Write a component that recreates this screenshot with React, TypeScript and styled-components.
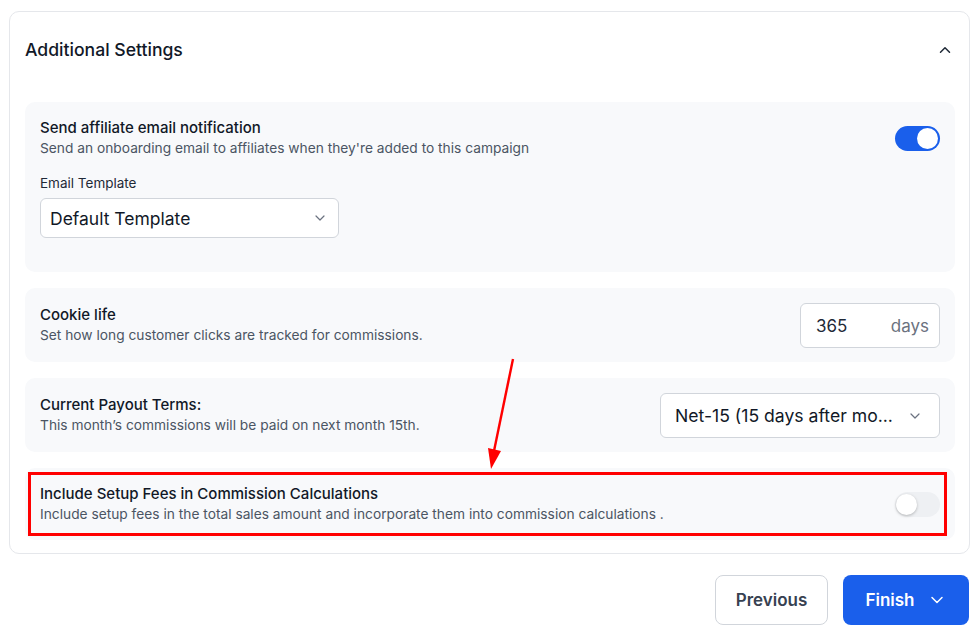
import { useState } from "react";
import styled, { createGlobalStyle } from "styled-components";

const GlobalStyle = createGlobalStyle`
  * { box-sizing: border-box; }
  body {
    margin: 0;
    background: #ffffff;
    font-family: Inter, "Noto Sans", sans-serif;
    color: #111827;
  }
`;

const ChevronDown = ({ color = "#6b7280", size = 16 }: { color?: string; size?: number }) => (
  <svg width={size} height={size} viewBox="0 0 24 24" fill="none" stroke={color} strokeWidth={1.8} strokeLinecap="round" strokeLinejoin="round">
    <path d="M6 9l6 6 6-6" />
  </svg>
);

const ChevronUp = () => (
  <svg width={18} height={18} viewBox="0 0 24 24" fill="none" stroke="#1f2937" strokeWidth={2} strokeLinecap="round" strokeLinejoin="round">
    <path d="M6 15l6-6 6 6" />
  </svg>
);

const App = () => {
  const [notify, setNotify] = useState(true);
  const [setupFees, setSetupFees] = useState(false);

  return (
    <>
      <GlobalStyle />
      <Page>
        <Card>
          <CardHeader>
            <CardTitle>Additional Settings</CardTitle>
            <IconButton>
              <ChevronUp />
            </IconButton>
          </CardHeader>
          <PanelList>
            <Panel $tall>
              <PanelRow>
                <TextBlock>
                  <PanelTitle>Send affiliate email notification</PanelTitle>
                  <PanelDesc>Send an onboarding email to affiliates when they're added to this campaign</PanelDesc>
                </TextBlock>
                <Toggle $on={notify} onClick={() => setNotify(v => !v)}>
                  <Knob $on={notify} />
                </Toggle>
              </PanelRow>
              <FieldLabel>Email Template</FieldLabel>
              <Select $width={299}>
                <SelectText $size={17.5}>Default Template</SelectText>
                <ChevronDown />
              </Select>
            </Panel>

            <Panel>
              <PanelRow>
                <TextBlock>
                  <PanelTitle>Cookie life</PanelTitle>
                  <PanelDesc>Set how long customer clicks are tracked for commissions.</PanelDesc>
                </TextBlock>
                <DaysInput>
                  <DaysValue>365</DaysValue>
                  <DaysUnit>days</DaysUnit>
                </DaysInput>
              </PanelRow>
            </Panel>

            <Panel>
              <PanelRow>
                <TextBlock>
                  <PanelTitle>Current Payout Terms:</PanelTitle>
                  <PanelDesc>This month’s commissions will be paid on next month 15th.</PanelDesc>
                </TextBlock>
                <Select $width={280} $height={45}>
                  <SelectText $size={17.6}>Net-15 (15 days after mo...</SelectText>
                  <ChevronDown />
                </Select>
              </PanelRow>
            </Panel>

            <Panel $compact>
              <PanelRow>
                <TextBlock>
                  <PanelTitle>Include Setup Fees in Commission Calculations</PanelTitle>
                  <PanelDesc>Include setup fees in the total sales amount and incorporate them into commission calculations .</PanelDesc>
                </TextBlock>
                <Toggle $on={setupFees} onClick={() => setSetupFees(v => !v)}>
                  <Knob $on={setupFees} />
                </Toggle>
              </PanelRow>
            </Panel>
          </PanelList>

          <Highlight />
          <Arrow width="40" height="120" viewBox="0 0 40 120">
            <line x1="31" y1="2" x2="12" y2="94" stroke="#ff0000" strokeWidth="2.4" />
            <polygon points="6,91 19,94 9,112" fill="#ff0000" />
          </Arrow>
        </Card>

        <Footer>
          <SecondaryButton>Previous</SecondaryButton>
          <PrimaryButton>
            Finish
            <ChevronDown color="#ffffff" size={20} />
          </PrimaryButton>
        </Footer>
      </Page>
    </>
  );
};

const Page = styled.div`
  padding: 11px 8px 0 9px;
`;

const Card = styled.div`
  position: relative;
  border: 1px solid #e5e7eb;
  border-radius: 10px;
  background: #ffffff;
`;

const CardHeader = styled.div`
  display: flex;
  align-items: flex-start;
  justify-content: space-between;
  height: 90px;
  padding: 26px 12px 0 15px;
`;

const CardTitle = styled.h2`
  margin: 0;
  font-size: 17.6px;
  line-height: 24px;
  font-weight: 500;
  color: #111827;
`;

const IconButton = styled.span`
  display: flex;
  align-items: center;
  justify-content: center;
  width: 24px;
  height: 24px;
`;

const PanelList = styled.div`
  display: flex;
  flex-direction: column;
  gap: 16px;
  padding: 0 14px 13px 15px;
`;

const Panel = styled.div<{ $tall?: boolean; $compact?: boolean }>`
  display: flex;
  flex-direction: column;
  justify-content: center;
  background: #f8f9fb;
  border-radius: 10px;
  padding: ${({ $tall }) => ($tall ? "16px 15px 34px" : "1px 15px 0")};
  min-height: ${({ $compact }) => ($compact ? "72px" : "74px")};
`;

const PanelRow = styled.div`
  display: flex;
  align-items: center;
  justify-content: space-between;
  gap: 16px;
`;

const TextBlock = styled.div`
  display: flex;
  flex-direction: column;
`;

const PanelTitle = styled.div`
  font-size: 15px;
  line-height: 20px;
  font-weight: 500;
  color: #111827;
`;

const PanelDesc = styled.div`
  font-size: 13.75px;
  line-height: 21px;
  color: #4b5563;
`;

const FieldLabel = styled.div`
  margin-top: 14px;
  font-size: 13.5px;
  line-height: 20px;
  color: #1f2937;
`;

const Select = styled.div<{ $width: number; $height?: number }>`
  display: flex;
  align-items: center;
  justify-content: space-between;
  width: ${({ $width }) => $width}px;
  height: ${({ $height }) => $height ?? 40}px;
  margin-top: ${({ $height }) => ($height ? 0 : 5)}px;
  padding: 0 ${({ $height }) => ($height ? 16 : 10)}px 0 ${({ $height }) => ($height ? 14 : 9)}px;
  background: #ffffff;
  border: 1px solid #d1d5db;
  border-radius: 6px;
  flex-shrink: 0;
`;

const SelectText = styled.span<{ $size: number }>`
  font-size: ${({ $size }) => $size}px;
  color: #111827;
  white-space: nowrap;
`;

const DaysInput = styled.div`
  display: flex;
  align-items: center;
  justify-content: space-between;
  width: 140px;
  height: 45px;
  padding: 0 10px 0 15px;
  background: #ffffff;
  border: 1px solid #d1d5db;
  border-radius: 6px;
  flex-shrink: 0;
`;

const DaysValue = styled.span`
  font-size: 17px;
  color: #1f2937;
`;

const DaysUnit = styled.span`
  font-size: 17px;
  color: #6b7280;
`;

const Toggle = styled.button<{ $on: boolean }>`
  position: relative;
  flex-shrink: 0;
  width: 45px;
  height: 25px;
  padding: 0;
  border: none;
  border-radius: 13px;
  background: ${({ $on }) => ($on ? "#1a5feb" : "#eef0f3")};
  cursor: pointer;
`;

const Knob = styled.span<{ $on: boolean }>`
  position: absolute;
  top: 2px;
  left: ${({ $on }) => ($on ? "22px" : "1px")};
  width: 21px;
  height: 21px;
  border-radius: 50%;
  background: #ffffff;
  box-shadow: ${({ $on }) => ($on ? "none" : "0 1px 3px rgba(0,0,0,0.25)")};
`;

const Highlight = styled.div`
  position: absolute;
  left: 18px;
  top: 460px;
  width: 919px;
  height: 64px;
  border: 3px solid #ff0000;
  pointer-events: none;
`;

const Arrow = styled.svg`
  position: absolute;
  left: 472px;
  top: 345px;
  pointer-events: none;
`;

const Footer = styled.div`
  display: flex;
  justify-content: flex-end;
  gap: 15px;
  padding: 21px 1px 0 0;
`;

const SecondaryButton = styled.button`
  width: 113px;
  height: 50px;
  background: #ffffff;
  border: 1px solid #d1d5db;
  border-radius: 8px;
  font-family: inherit;
  font-size: 17px;
  font-weight: 600;
  color: #374151;
`;

const PrimaryButton = styled.button`
  display: flex;
  align-items: center;
  justify-content: center;
  gap: 12px;
  width: 126px;
  height: 50px;
  background: #1a5feb;
  border: none;
  border-radius: 8px;
  font-family: inherit;
  font-size: 17px;
  font-weight: 600;
  color: #ffffff;
  padding-left: 6px;
`;

export default App;
